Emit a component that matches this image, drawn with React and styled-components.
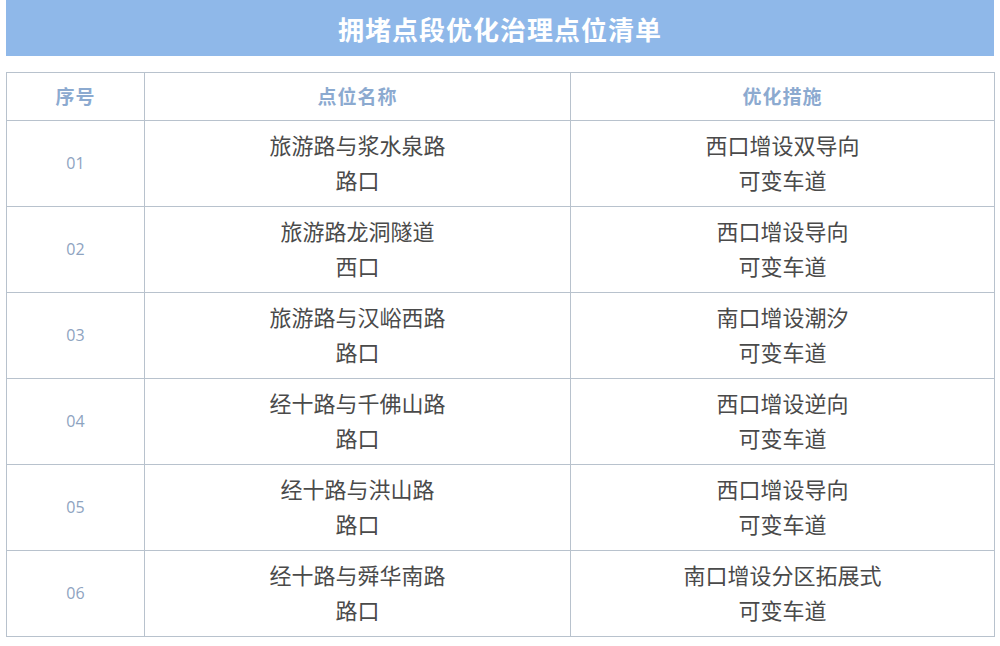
import React from 'react';
import styled, { createGlobalStyle } from 'styled-components';

const GlobalStyle = createGlobalStyle`
  html, body {
    margin: 0;
    padding: 0;
    background: #fff;
  }
  body {
    font-family: "Noto Sans CJK SC", "Microsoft YaHei", sans-serif;
  }
`;

const Page = styled.div`
  width: 1000px;
  padding: 0 6px;
  box-sizing: border-box;
`;

const Banner = styled.div`
  height: 56px;
  background: #8fb8e9;
  display: flex;
  align-items: center;
  justify-content: center;
  color: #fff;
  font-size: 26px;
  font-weight: 700;
  letter-spacing: 1px;
`;

const Table = styled.table`
  margin-top: 16px;
  width: 988px;
  border-collapse: collapse;
  table-layout: fixed;
  border: 1.5px solid #b8c2cd;
`;

const Th = styled.th`
  box-sizing: border-box;
  height: 48px;
  padding: 0 0 2px;
  border: 1.5px solid #b8c2cd;
  color: #8caad0;
  font-size: 19px;
  font-weight: 700;
  letter-spacing: 1px;
  text-align: center;
`;

const Td = styled.td`
  box-sizing: border-box;
  height: 86px;
  padding: 0 0 ${p => (p.$num ? '0' : '4px')};
  border: 1.5px solid #b8c2cd;
  text-align: center;
  color: ${p => (p.$num ? '#8ea3bf' : '#4a4a4a')};
  font-size: ${p => (p.$num ? '16px' : '22px')};
  font-family: ${p => (p.$num ? '"Open Sans", "Noto Sans", sans-serif' : 'inherit')};
  line-height: 35px;
`;

const rows = [
  ['01', '旅游路与浆水泉路', '路口', '西口增设双导向', '可变车道'],
  ['02', '旅游路龙洞隧道', '西口', '西口增设导向', '可变车道'],
  ['03', '旅游路与汉峪西路', '路口', '南口增设潮汐', '可变车道'],
  ['04', '经十路与千佛山路', '路口', '西口增设逆向', '可变车道'],
  ['05', '经十路与洪山路', '路口', '西口增设导向', '可变车道'],
  ['06', '经十路与舜华南路', '路口', '南口增设分区拓展式', '可变车道'],
];

export default function App() {
  return (
    <Page>
      <GlobalStyle />
      <Banner>拥堵点段优化治理点位清单</Banner>
      <Table>
        <colgroup>
          <col style={{ width: 138 }} />
          <col style={{ width: 426 }} />
          <col style={{ width: 424 }} />
        </colgroup>
        <thead>
          <tr>
            <Th>序号</Th>
            <Th>点位名称</Th>
            <Th>优化措施</Th>
          </tr>
        </thead>
        <tbody>
          {rows.map(r => (
            <tr key={r[0]}>
              <Td $num>{r[0]}</Td>
              <Td>{r[1]}<br />{r[2]}</Td>
              <Td>{r[3]}<br />{r[4]}</Td>
            </tr>
          ))}
        </tbody>
      </Table>
    </Page>
  );
}
